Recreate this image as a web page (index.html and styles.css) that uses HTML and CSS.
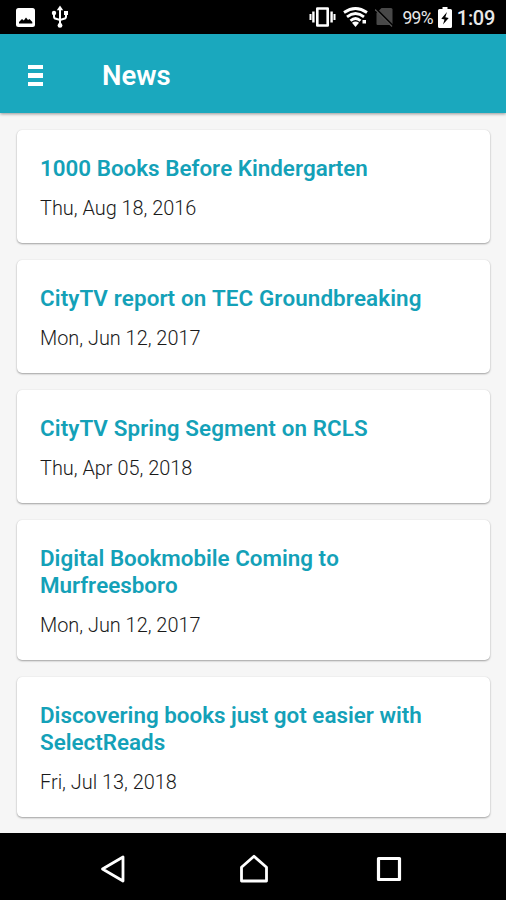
FILE: index.html
```
<!DOCTYPE html>
<html lang="en">

<head>

<meta charset="utf-8">
<meta name="viewport" content="width=device-width, initial-scale=1.0">

<link rel="stylesheet" href="styles.css">

<title>News</title>

</head>

<body>

<div class="status">
  <svg class="picture" width="19" height="19" viewBox="0 0 19 19">
    <rect width="19" height="19" rx="2.5" fill="#fff"/>
    <path d="M3 15.5v-1.500l3-3 1.800 1.500 2.200-3 2 2.500 1.500-1 2.800 3v1.500z" fill="#000"/>
  </svg>
  <svg class="usb" width="18" height="24" viewBox="0 0 18 24">
    <path d="M9 3v17M3 8v3.500q0 2 2 2.300l4 1.200 4-1.200q2-.3 2-2.300V8" fill="none" stroke="#fff" stroke-width="2"/>
    <path d="M9 .5l3.200 4.700H5.800z" fill="#fff"/>
    <circle cx="3" cy="8" r="2.200" fill="#fff"/>
    <path d="M13 6h4v4h-4z" fill="#fff"/>
    <circle cx="9" cy="20.400" r="2.400" fill="#fff"/>
  </svg>

  <div class="status-right">
    <svg class="vibrate" width="27" height="20" viewBox="0 0 27 20">
      <path d="M8.300 1.500h10.400v17H8.300z" fill="none" stroke="#fff" stroke-width="2.600" stroke-linejoin="round"/>
      <path d="M4.400 4.500v11M22.600 4.500v11" stroke="#fff" stroke-width="2.400"/>
      <path d="M1.500 7v6M25.500 7v6" stroke="#fff" stroke-width="2"/>
    </svg>
    <svg class="wifi" width="25" height="20" viewBox="0 0 25 20">
      <path d="M1 5.500Q12.500 -2.500 24 5.500M4 9.800Q12.500 3.200 21 9.800M7.500 13.800Q12.500 9.200 17.500 13.800" fill="none" stroke="#fff" stroke-width="2.800"/>
      <path d="M9 15.800q3.500-2.600 7 0l-3.500 4.200z" fill="#fff"/>
      <path d="M19.500 13h3.500v3.500h-3.500z" fill="#fff"/>
    </svg>
    <svg class="nosim" width="20" height="20" viewBox="0 0 20 20">
      <path d="M6.500 1H16q1.500 0 1.500 1.500V18H2.500q-1 0-1-1V6z" fill="#484848"/>
      <path d="M.5 1.500L18.500 19.500" stroke="#000" stroke-width="2.200"/>
      <path d="M0 2.500L17 19.500" stroke="#555" stroke-width="1.200"/>
    </svg>
    <span class="percent">99%</span>
    <svg class="battery" width="14" height="21" viewBox="0 0 14 21">
      <path d="M4.500 0h5v2H12.500q1.500 0 1.500 1.500v16q0 1.500-1.500 1.500h-11q-1.500 0-1.500-1.500v-16Q0 2 1.500 2h3z" fill="#fff"/>
      <path d="M9 5L3.300 11.800l3.200.6L5 17.500l5.700-6.500-3.400-.8z" fill="#000"/>
    </svg>
    <span class="clock">1:09</span>
  </div>
</div>

<div class="toolbar">
  <div class="menu"><i></i><i></i><i></i></div>
  <h1>News</h1>
</div>

<div class="content">
  <div class="card">
    <h2>1000 Books Before Kindergarten</h2>
    <p>Thu, Aug 18, 2016</p>
  </div>
  <div class="card">
    <h2 class="spaced">CityTV report on TEC Groundbreaking</h2>
    <p>Mon, Jun 12, 2017</p>
  </div>
  <div class="card">
    <h2 class="spaced">CityTV Spring Segment on RCLS</h2>
    <p>Thu, Apr 05, 2018</p>
  </div>
  <div class="card">
    <h2>Digital Bookmobile Coming to Murfreesboro</h2>
    <p>Mon, Jun 12, 2017</p>
  </div>
  <div class="card">
    <h2>Discovering books just got easier with SelectReads</h2>
    <p>Fri, Jul 13, 2018</p>
  </div>
</div>

<div class="navbar">
  <svg width="28" height="30" viewBox="0 0 28 30">
    <path d="M24 3v24L3.500 15z" fill="none" stroke="#fff" stroke-width="2.800" stroke-linejoin="round"/>
  </svg>
  <svg class="home" width="30" height="30" viewBox="0 0 30 30">
    <path d="M2.500 27V13.200L15 2.300l12.500 10.900V27z" fill="none" stroke="#fff" stroke-width="2.800" stroke-linejoin="round"/>
  </svg>
  <svg width="26" height="26" viewBox="0 0 26 26">
    <path d="M2.500 2.500h21v21h-21z" fill="none" stroke="#fff" stroke-width="3.200" stroke-linejoin="round"/>
  </svg>
</div>

</body>
</html>
```

FILE: styles.css
```
html, body {
  margin: 0;
  padding: 0;
}

body {
  display: flex;
  flex-direction: column;
  height: 900px;
  overflow: hidden;
  background: #f6f6f6;
  color: #1a1a1a;
  font-family: Roboto, 'Liberation Sans', sans-serif;
}

h1, h2, p {
  margin: 0;
}

.status {
  display: flex;
  align-items: center;
  flex: none;
  height: 34px;
  box-sizing: border-box;
  padding: 0 11px 0 16px;
  background: #000;
  color: #e8e8e8;
}

.usb {
  margin-left: 16px;
}

.status-right {
  display: flex;
  align-items: center;
  margin-left: auto;
}

.wifi {
  margin-left: 7px;
}

.nosim {
  margin-left: 7px;
}

.percent {
  margin: 2px 0 0 7px;
  font-size: 17.500px;
  letter-spacing: -.7px;
}

.battery {
  margin-left: 5px;
}

.clock {
  margin: 2px 0 0 5px;
  font-size: 20px;
  font-weight: 500;
  letter-spacing: -.3px;
}

.toolbar {
  display: flex;
  align-items: center;
  flex: none;
  height: 79px;
  padding: 4px 28px 0;
  box-sizing: border-box;
  background: #1aa8be;
  box-shadow: 0 1px 3px rgba(0, 0, 0, .4);
}

.menu {
  display: flex;
  flex-direction: column;
  gap: 4px;
  width: 15px;
}

.menu i {
  height: 4.500px;
  background: #fff;
}

.toolbar h1 {
  margin-left: 59px;
  color: #fff;
  font-size: 27.500px;
  font-weight: 600;
}

.content {
  display: flex;
  flex-direction: column;
  flex: 1;
  gap: 17px;
  padding: 17px 16px 0 17px;
}

.card {
  padding: 25px 23px 22px;
  border-radius: 5px;
  background: #fff;
  box-shadow: 0 1px 2px rgba(0, 0, 0, .34), 0 0 1px rgba(0, 0, 0, .12);
}

.card h2 {
  color: #14a1b8;
  font-size: 22.400px;
  font-weight: 600;
  line-height: 27px;
  font-kerning: none;
}

.card h2.spaced {
  letter-spacing: .1px;
}

.card p {
  margin-top: 14px;
  font-size: 19.900px;
  font-weight: 350;
  line-height: 25px;
}

.navbar {
  display: flex;
  align-items: center;
  justify-content: space-between;
  flex: none;
  height: 67px;
  padding: 4px 104px 0 99px;
  box-sizing: border-box;
  background: #000;
}

.home {
  margin-left: 4px;
}
```
